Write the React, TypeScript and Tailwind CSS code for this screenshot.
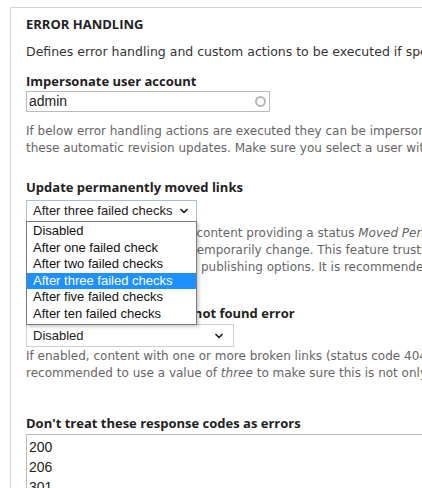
import { ChevronDown } from "lucide-react";

const body = "font-['DejaVu_Sans',sans-serif]";
const heading = "font-['Open_Sans','Noto_Sans',sans-serif]";
const control = "font-['Liberation_Sans',Arial,sans-serif]";

const options = [
  "Disabled",
  "After one failed check",
  "After two failed checks",
  "After three failed checks",
  "After five failed checks",
  "After ten failed checks",
];

function Label({ children, className = "" }: { children: React.ReactNode; className?: string }) {
  return (
    <div className={`${heading} text-[13px] font-bold leading-[16px] text-[#222] whitespace-nowrap ${className}`}>
      {children}
    </div>
  );
}

function Help({ lines, className = "" }: { lines: React.ReactNode[]; className?: string }) {
  return (
    <div className={`${body} text-[12px] leading-[17px] text-[#666] ${className}`}>
      {lines.map((l, i) => (
        <div key={i} className="whitespace-nowrap">
          {l}
        </div>
      ))}
    </div>
  );
}

export default function App() {
  return (
    <div className="relative w-[422px] h-[488px] overflow-hidden bg-white">
      <div className="mt-[7px] ml-[10px] w-[700px] h-[600px] border border-[#d4d4d4] pl-[15px] pt-[8px]">
        <div className={`${heading} text-[13px] font-bold leading-[16px] text-[#222]`}>ERROR HANDLING</div>
        <div className={`${body} mt-[11px] text-[12.5px] leading-[17px] text-[#333] whitespace-nowrap`}>
          Defines error handling and custom actions to be executed if specific HTTP requests are failing.
        </div>

        <Label className="mt-[13px]">Impersonate user account</Label>
        <div className="mt-[2px] flex h-[21px] w-[244px] items-center justify-between border border-[#bbb] pl-[2px] pr-[3px]">
          <span className={`${control} text-[14px] text-[#222]`}>admin</span>
          <span className="h-[11px] w-[11px] rounded-full border-2 border-[#b8b8b8]" />
        </div>
        <Help
          className="mt-[11px]"
          lines={[
            "If below error handling actions are executed they can be impersonated with a custom user account.",
            "these automatic revision updates. Make sure you select a user with access rights.",
          ]}
        />

        <Label className="mt-[22px]">Update permanently moved links</Label>
        <div className="mt-[5px] flex h-[22px] w-[171px] items-center justify-between border border-[#a9bdd3] pl-[6px] pr-[6px]">
          <span className={`${control} text-[13px] text-[#222] whitespace-nowrap`}>After three failed checks</span>
          <ChevronDown className="h-[12px] w-[12px] text-[#222]" strokeWidth={3.5} />
        </div>
        <Help
          className="mt-[3px]"
          lines={[
            <>
              If enabled, outgoing links in content providing a status <em>Moved Permanently</em> (status code 301)
            </>,
            "make sure this is not just a temporarily change. This feature trust sites to provide a valid redirect.",
            "it is enabled in the content's publishing options. It is recommended to create new revisions.",
          ]}
        />

        <Label className="mt-[29px]">Unpublish content on file not found error</Label>
        <div className="mt-[3px] flex h-[23px] w-[208px] items-center justify-between border border-[#cfcfcf] pl-[6px] pr-[8px]">
          <span className={`${control} text-[13px] text-[#222]`}>Disabled</span>
          <ChevronDown className="h-[12px] w-[12px] text-[#222]" strokeWidth={3.5} />
        </div>
        <Help
          className="mt-[1px] text-[11.9px]"
          lines={[
            "If enabled, content with one or more broken links (status code 404) will be unpublished.",
            <>
              recommended to use a value of <em>three</em> to make sure this is not only a temporarily error.
            </>,
          ]}
        />

        <Label className="mt-[33px]">Don't treat these response codes as errors</Label>
        <div className={`${control} mt-[3px] border border-[#bbb] px-[2px] pt-[2px] text-[14px] leading-[20px] text-[#222]`}>
          <div>200</div>
          <div>206</div>
          <div>301</div>
          <div>302</div>
        </div>
      </div>

      <ul
        className={`${control} absolute left-[26px] top-[221px] w-[171px] border border-[#7a7a7a] bg-white py-[1px] text-[13px] text-[#111] shadow-[2px_2px_3px_rgba(0,0,0,0.2)]`}
      >
        {options.map((o) => (
          <li
            key={o}
            className={`h-[16.6px] leading-[16.6px] px-[6px] whitespace-nowrap ${
              o === "After three failed checks" ? "bg-[#1e90ff] text-white" : ""
            }`}
          >
            {o}
          </li>
        ))}
      </ul>
    </div>
  );
}
